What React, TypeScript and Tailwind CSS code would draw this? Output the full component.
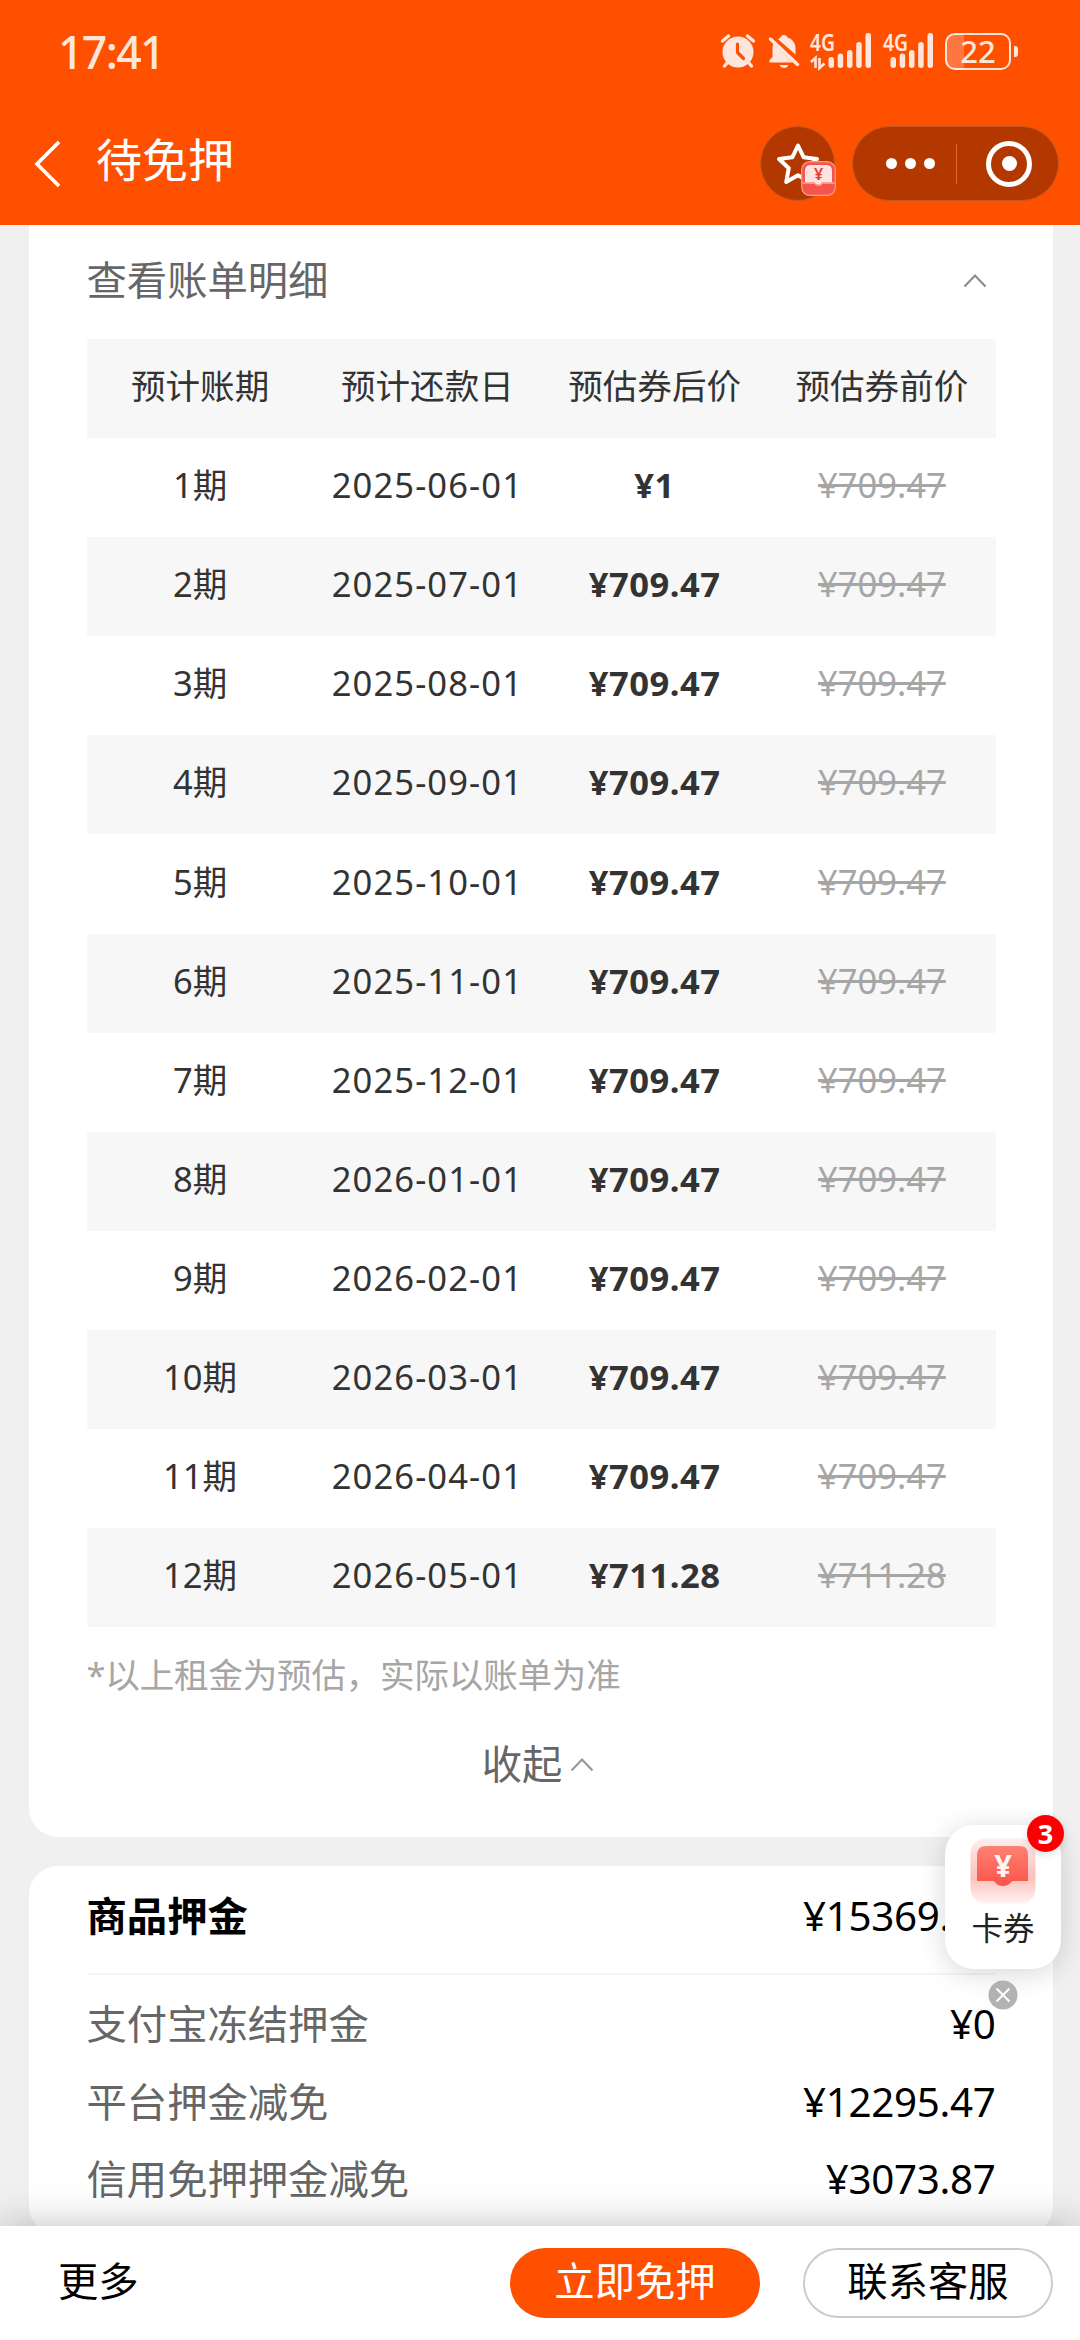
import type { ReactNode } from "react";

const ORIGINAL = "¥709.47";

const BILLS = [
  { term: "1期", date: "2025-06-01", price: "¥1", original: ORIGINAL },
  { term: "2期", date: "2025-07-01", price: "¥709.47", original: ORIGINAL },
  { term: "3期", date: "2025-08-01", price: "¥709.47", original: ORIGINAL },
  { term: "4期", date: "2025-09-01", price: "¥709.47", original: ORIGINAL },
  { term: "5期", date: "2025-10-01", price: "¥709.47", original: ORIGINAL },
  { term: "6期", date: "2025-11-01", price: "¥709.47", original: ORIGINAL },
  { term: "7期", date: "2025-12-01", price: "¥709.47", original: ORIGINAL },
  { term: "8期", date: "2026-01-01", price: "¥709.47", original: ORIGINAL },
  { term: "9期", date: "2026-02-01", price: "¥709.47", original: ORIGINAL },
  { term: "10期", date: "2026-03-01", price: "¥709.47", original: ORIGINAL },
  { term: "11期", date: "2026-04-01", price: "¥709.47", original: ORIGINAL },
  { term: "12期", date: "2026-05-01", price: "¥711.28", original: "¥711.28" },
];

const HEADERS = ["预计账期", "预计还款日", "预估券后价", "预估券前价"];

const DEPOSITS = [
  { label: "支付宝冻结押金", amount: "¥0" },
  { label: "平台押金减免", amount: "¥12295.47" },
  { label: "信用免押押金减免", amount: "¥3073.87" },
];

function AlarmIcon() {
  return (
    <svg width="36" height="36" viewBox="0 0 36 36" fill="none" className="shrink-0">
      <path d="M2.500 8 8.500 3M33.500 8 27.500 3" stroke="#ffe6dc" strokeWidth="3.400" strokeLinecap="round" />
      <path d="M7.500 29.500 4.500 33M28.500 29.500 31.500 33" stroke="#ffe6dc" strokeWidth="3.400" strokeLinecap="round" />
      <circle cx="18" cy="19" r="15.500" fill="#ffe6dc" />
      <path d="M17.500 11v8.500l6 6" stroke="#ff5000" strokeWidth="3.200" strokeLinecap="round" strokeLinejoin="round" />
    </svg>
  );
}

function MutedBellIcon() {
  return (
    <svg width="32" height="36" viewBox="0 0 32 36" fill="none" className="shrink-0">
      <path
        d="M12.500 4.500C13 2.800 14.300 2 16 2s3 .8 3.500 2.500C24.500 6 27.500 10 27.500 15v6.500L10 6.200c.8-.8 1.600-1.300 2.500-1.700Z"
        fill="#ffe6dc"
      />
      <path d="M5.200 10.500 25 29.500H2.500c-1.400 0-1.700-1.500-.8-2.500l3-3.200c-.3-4.600-.5-9.300.5-13.300Z" fill="#ffe6dc" />
      <path d="M11.500 32h9c-.8 2-2.400 3-4.500 3s-3.700-1-4.500-3Z" fill="#ffe6dc" />
      <path d="m2.500 6 27 25.500" stroke="#ffe6dc" strokeWidth="3.400" strokeLinecap="round" />
    </svg>
  );
}

function Signal({ active = false }: { active?: boolean }) {
  return (
    <svg width="62" height="36" viewBox="0 0 62 36" fill="#ffe6dc" className="shrink-0 overflow-visible">
      <text x="0" y="17.500" fontSize="23" fontWeight="600" textLength="25" lengthAdjust="spacingAndGlyphs">
        4G
      </text>
      {active && (
        <path d="m1 29 4.500-4v10M9.500 25v10l5-4.500" fill="none" stroke="#ffe6dc" strokeWidth="2.600" />
      )}
      <g transform={active ? "translate(18.500 0)" : "translate(7.500 0)"}>
        <rect x="0" y="24" width="5.500" height="11" rx="2.700" />
        <rect x="9.200" y="20.500" width="5.500" height="14.500" rx="2.700" />
        <rect x="18.500" y="17" width="5.500" height="18" rx="2.700" />
        <rect x="27.700" y="9" width="5.500" height="26" rx="2.700" />
        <rect x="37" y="0" width="5.500" height="35" rx="2.700" />
      </g>
    </svg>
  );
}

function Caret({ color }: { color: string }) {
  return (
    <svg width="24" height="15" viewBox="0 0 24 15" fill="none" className="shrink-0">
      <path d="m1.500 13.500 10.500-11 10.500 11" stroke={color} strokeWidth="2.200" />
    </svg>
  );
}

function StatusBar() {
  return (
    <div className="flex h-[102px] items-start justify-between pl-[58px] pr-[62px] pt-[32px] text-[#ffe6dc]">
      <span className="text-[44.500px] font-medium leading-[40px] tracking-[-1.6px]">17:41</span>
      <div className="flex h-[38px] items-center">
        <AlarmIcon />
        <span className="ml-[12px] flex">
          <MutedBellIcon />
        </span>
        <span className="ml-[10px] flex">
          <Signal active />
        </span>
        <span className="ml-[11px] flex">
          <Signal />
        </span>
        <div className="flex h-[37px] w-[66px] items-center justify-center rounded-[10px] border-2 border-[#ffe6dc] bg-linear-to-r from-[#ff7740] from-[28%] to-[#ff5000] to-[28%]">
          <span className="text-[31px] leading-[33px] font-medium text-[#ffe6dc]">22</span>
        </div>
        <i className="ml-[3px] h-[11px] w-[4px] rounded-r-[3px] bg-[#ffe6dc]" />
      </div>
    </div>
  );
}

function NavBar() {
  return (
    <div className="flex h-[123px] items-start pl-[33px] pr-[21px] pt-[24px]">
      <svg width="30" height="48" viewBox="0 0 30 48" fill="none" className="mt-[14px]">
        <path d="M26 2 4 24l22 22" stroke="white" strokeWidth="3.600" />
      </svg>
      <h1 className="ml-[33px] mt-[3px] text-[46px] leading-[60px] text-white">待免押</h1>
      <div className="relative ml-auto flex h-[75px] w-[75px] items-center justify-center rounded-full border border-[#c4571f] bg-[#b23800]">
        <svg width="46" height="46" viewBox="0 0 46 46" fill="none">
          <path
            d="m23 4.500 5.700 11.800 13.300 1.700-9.800 9.200 2.600 13.800-11.800-6.800-11.800 6.800 2.600-13.800L4 18l13.300-1.700Z"
            stroke="white"
            strokeWidth="4"
            strokeLinejoin="round"
          />
        </svg>
        <svg width="35" height="35" viewBox="0 0 35 35" className="absolute left-[40px] top-[34px]">
          <rect x="0.700" y="0.700" width="33.600" height="33.600" rx="8" fill="#f4564c" stroke="#fa9a90" strokeWidth="1.200" />
          <path d="M4 21.500V10c0-4 2-6 6-6h15c4 0 6 2 6 6v11.500H21c-1 3-6 3-7.500 0Z" fill="#ffe3e0" />
          <path d="M1 22h12.500c1.500 3 6.500 3 7.500 0H34" fill="none" stroke="#fda59c" strokeWidth="1.300" />
          <text x="17.500" y="19" textAnchor="middle" fontSize="16" fontWeight="600" fill="#e03a30">
            ¥
          </text>
        </svg>
      </div>
      <div className="ml-[17px] flex h-[75px] w-[207px] items-center rounded-full border border-[#c4571f] bg-[#b23800]">
        <div className="flex w-[103px] justify-end gap-[8px] pr-[21px]">
          <i className="size-[11px] rounded-full bg-white" />
          <i className="size-[11px] rounded-full bg-white" />
          <i className="size-[11px] rounded-full bg-white" />
        </div>
        <i className="h-[40px] w-px bg-[#e0662d]" />
        <div className="ml-[29px] flex size-[46px] items-center justify-center rounded-full border-[5.5px] border-white">
          <i className="size-[15px] rounded-full bg-white" />
        </div>
      </div>
    </div>
  );
}

function Row({ shaded, children }: { shaded: boolean; children: ReactNode }) {
  return (
    <div
      className={`grid h-[99.1px] grid-cols-4 items-center pb-[5px] text-center text-[34.56px] leading-[48px] text-[#333] ${
        shaded ? "bg-[#f7f7f7]" : "bg-white"
      }`}
    >
      {children}
    </div>
  );
}

function BillCard() {
  return (
    <section className="h-[1612px] shrink-0 rounded-b-[29px] bg-white px-[57.500px]">
      <div className="flex h-[114px] items-center justify-between pb-[4px] pr-[9px]">
        <h2 className="text-[40.320px] leading-[56px] text-[#666]">查看账单明细</h2>
        <Caret color="#8c8c8c" />
      </div>

      <div>
        <Row shaded>
          {HEADERS.map((title) => (
            <span key={title}>{title}</span>
          ))}
        </Row>
        {BILLS.map((bill, i) => (
          <Row key={bill.term} shaded={i % 2 === 1}>
            <span>{bill.term}</span>
            <span className="tracking-[1.1px]">{bill.date}</span>
            <span className="font-bold tracking-[0.5px]">{bill.price}</span>
            <span className="text-[#a6a6a6] line-through decoration-[3px]">{bill.original}</span>
          </Row>
        ))}
      </div>

      <p className="mt-[24px] text-[34.560px] leading-[48px] tracking-[-0.2px] text-[#a6a6a6]">
        *以上租金为预估，实际以账单为准
      </p>
      <div className="mt-[37px] flex items-center justify-center gap-[8px] pr-[6px]">
        <span className="text-[40.320px] leading-[56px] text-[#666]">收起</span>
        <Caret color="#999" />
      </div>
    </section>
  );
}

function DepositCard() {
  return (
    <section className="mt-[29px] h-[369px] shrink-0 rounded-[29px] bg-white px-[57.500px] text-[40.320px] text-black">
      <div className="flex h-[109px] items-center justify-between border-b-2 border-[#f5f5f5] pb-[7px] leading-[56px]">
        <h2 className="font-bold">商品押金</h2>
        <span className="tracking-[-0.3px]">¥15369.34</span>
      </div>
      <div className="pt-[10px]">
        {DEPOSITS.map((item) => (
          <div key={item.label} className="flex h-[77.8px] items-center justify-between leading-[56px]">
            <span className="text-[#666]">{item.label}</span>
            <span className="tracking-[-0.3px]">{item.amount}</span>
          </div>
        ))}
      </div>
    </section>
  );
}

function CouponFloat() {
  return (
    <div className="absolute left-[945px] top-[1825px] z-20 w-[116px]">
      <div className="flex h-[144px] flex-col items-center rounded-[29px] bg-white pt-[13px] shadow-[0_4px_28px_rgba(0,0,0,0.16)]">
        <svg width="66" height="66" viewBox="0 0 66 66">
          <defs>
            <linearGradient id="ticket" x1="0" y1="0" x2="0" y2="1">
              <stop offset="0" stopColor="#fb8274" />
              <stop offset="1" stopColor="#fd5348" />
            </linearGradient>
            <linearGradient id="pocket" x1="0" y1="0" x2="0" y2="1">
              <stop offset="0" stopColor="#fdeeee" />
              <stop offset="0.6" stopColor="#fcc0bb" />
              <stop offset="1" stopColor="#fff3f2" />
            </linearGradient>
          </defs>
          <rect x="0.500" y="0.500" width="65" height="65" rx="15" fill="url(#pocket)" />
          <path d="M7 43V18C7 11 10 8 17 8h32c7 0 9 3 9 10v25H43c-2 0-3 5-10 5s-8-5-10-5Z" fill="url(#ticket)" />
          <text x="33" y="39" textAnchor="middle" fontSize="31" fontWeight="700" fill="#fff4f2">
            ¥
          </text>
        </svg>
        <span className="mt-[2px] text-[31.500px] leading-[44px] text-[#222]">卡券</span>
      </div>
      <span className="absolute left-[82px] top-[-10px] flex size-[37px] items-center justify-center rounded-full bg-[#fa0000] text-[27px] font-bold leading-none text-white shadow-[0_3px_8px_rgba(0,0,0,0.12)]">
        3
      </span>
      <svg width="30" height="30" viewBox="0 0 30 30" className="ml-[43px] mt-[11px]">
        <circle cx="15" cy="15" r="14.500" fill="#b2b2b2" />
        <path d="m8.500 8.500 13 13m0-13-13 13" stroke="white" strokeWidth="2" />
      </svg>
    </div>
  );
}

function BottomBar() {
  return (
    <footer className="relative z-10 flex h-[114px] shrink-0 items-center bg-white pl-[58px] pr-[27px] text-[40.320px] leading-[56px] text-black shadow-[0_0_40px_rgba(0,0,0,0.25)]">
      <span className="pb-[5px]">更多</span>
      <button className="ml-auto h-[70px] w-[250px] rounded-full bg-[#ff5000] pb-[5px] text-white">立即免押</button>
      <button className="ml-[43px] h-[70px] w-[250px] rounded-full border-2 border-[#ccc] pb-[5px]">联系客服</button>
    </footer>
  );
}

export default function App() {
  return (
    <div className="relative flex h-[2340px] w-[1080px] flex-col overflow-hidden bg-[#f0f0f0] font-['Noto_Sans','Noto_Sans_CJK_SC',sans-serif]">
      <header className="shrink-0 bg-[#ff5000]">
        <StatusBar />
        <NavBar />
      </header>
      <main className="flex min-h-0 flex-1 flex-col overflow-hidden pl-[29px] pr-[27px]">
        <BillCard />
        <DepositCard />
      </main>
      <BottomBar />
      <CouponFloat />
    </div>
  );
}
